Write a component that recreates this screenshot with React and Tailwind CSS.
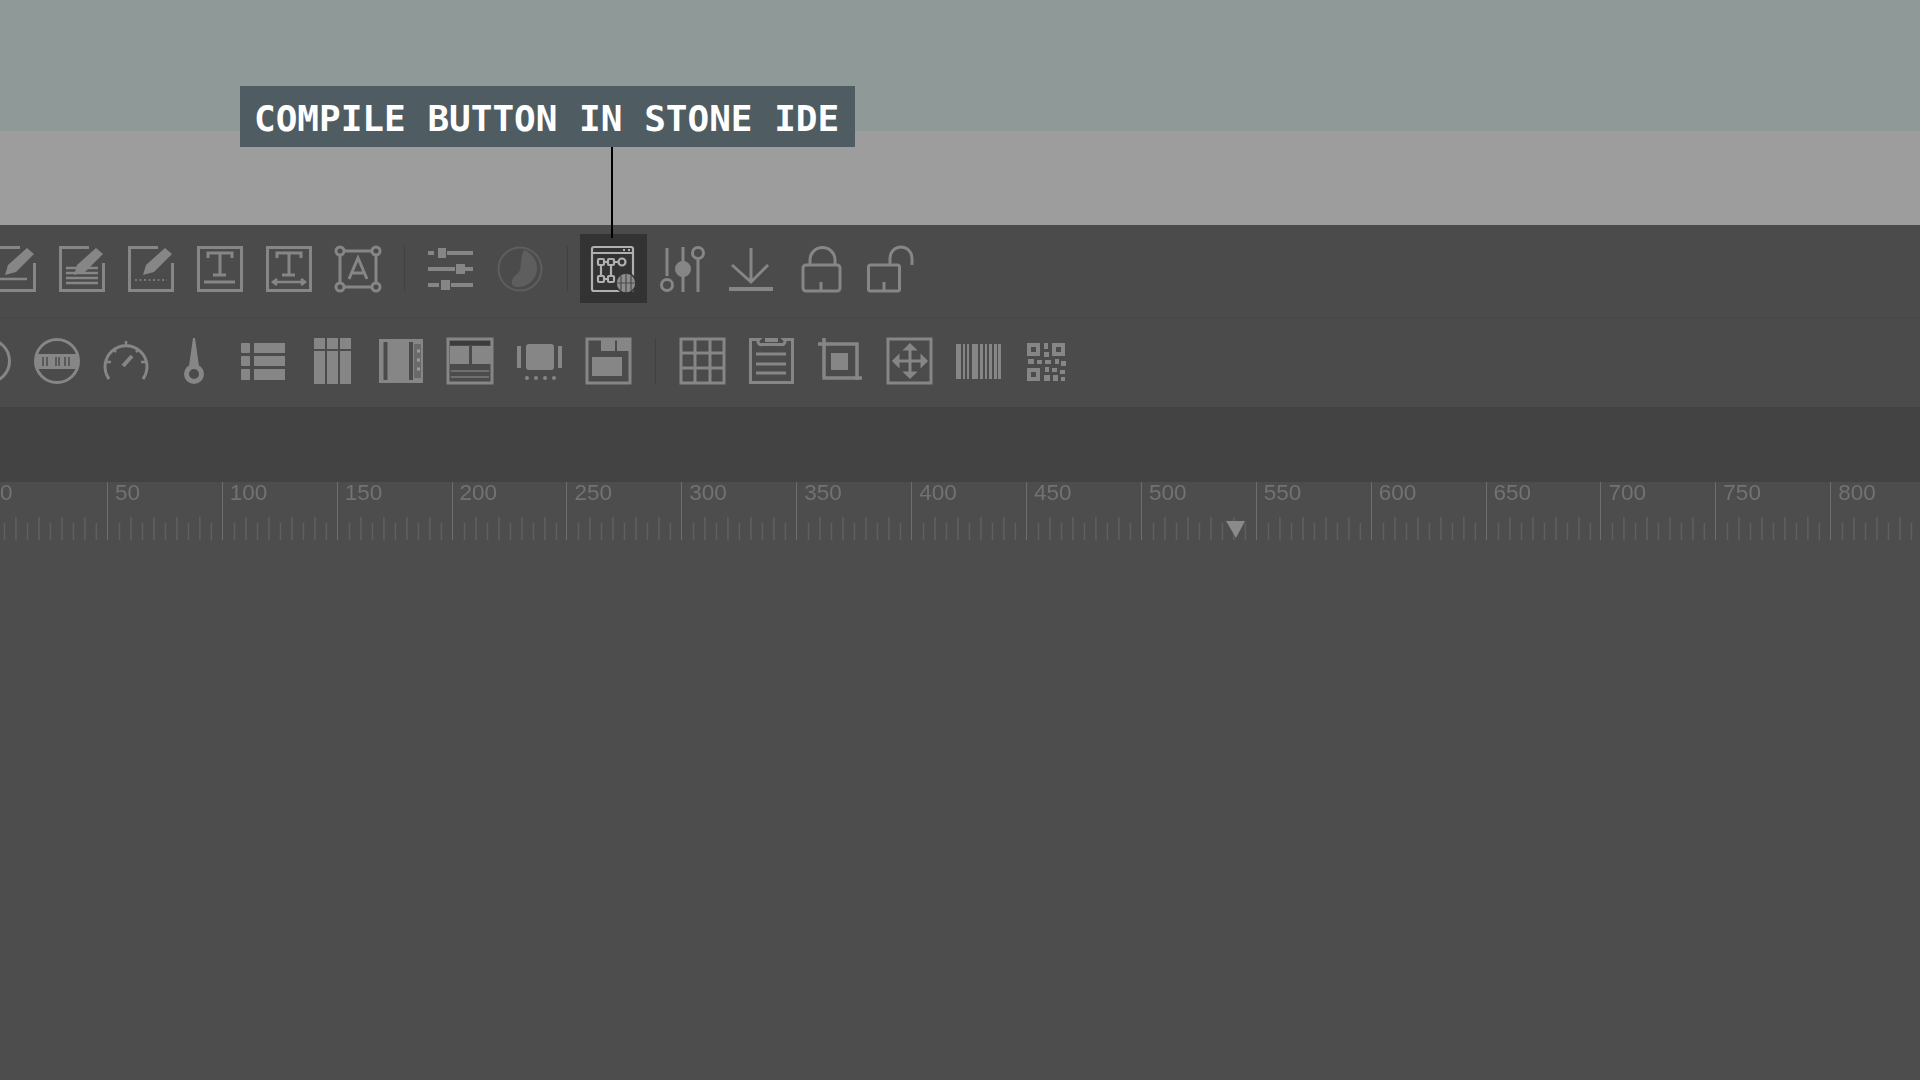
import React from 'react';

const Box = () => <rect x="1.5" y="1.5" width="43" height="43" fill="none" stroke="currentColor" strokeWidth="3" />;
const Pencil = () => <path d="M15 29l3-10L37 2l7 6-18 18z" fill="currentColor" stroke="none" />;
const Notched = () => <path d="M30 1.5H1.5v43h43V17" fill="none" stroke="currentColor" strokeWidth="3" />;

const Icon = ({ children, className = 'text-[#868686]' }) => (
  <svg viewBox="0 0 46 46" className={`w-[46px] h-[46px] shrink-0 overflow-visible blur-[0.7px] ${className}`} fill="none" stroke="currentColor" strokeWidth="3">
    {children}
  </svg>
);

const Sep = ({ className = '' }) => <div className={`w-px h-[46px] bg-[#414141] shrink-0 ${className}`}></div>;

const topRow = [
  <><Notched /><Pencil /><path d="M1 33h36" strokeWidth="2.500" /></>,
  <><Notched /><Pencil /><path d="M7 22h32M7 27h32M7 32h32M7 37h32" strokeWidth="2.500" /></>,
  <><Notched /><Pencil /><path d="M7 34h32" strokeWidth="1.500" strokeDasharray="2 2.500" /></>,
  <><Box /><path d="M11 12V7h24v5M23 7v22M16 29h13" /><path d="M7 36h31" /></>,
  <><Box /><path d="M11 12V7h24v5M23 7v22M16 29h13" /><path d="M7 36h32M11 33l-4 3 4 3M35 33l4 3-4 3" strokeWidth="2.500" /></>,
  <><path d="M9 5h28M5 9v28M41 9v28M9 41h28" /><circle cx="5" cy="5" r="4" /><circle cx="41" cy="5" r="4" /><circle cx="5" cy="41" r="4" /><circle cx="41" cy="41" r="4" /><path d="M14 33l9-21 9 21M17 27h12" /></>,
];

const rightRow = [
  <><path d="M7 2v28M23 1v45M38 13v33" /><circle cx="7" cy="39" r="5.500" /><circle cx="23" cy="23" r="6.500" fill="currentColor" /><circle cx="38" cy="7" r="5.500" /></>,
  <><path d="M22 2v34M3 19l19 17 17-17" /><path d="M0 43h44" strokeWidth="4" /></>,
  <><rect x="5" y="19" width="37" height="26" rx="3" /><path d="M12 19v-5a12.500 12.500 0 0 1 25 0v5M23 36v9" /></>,
  <><rect x="1.500" y="19" width="31" height="26" rx="2" /><path d="M23 19v-7a11 11 0 0 1 22 0v7M17 36v9" /></>,
];

const bottomRow = [
  <circle cx="23" cy="23" r="21.500" />,
  <><circle cx="23" cy="23" r="21.500" /><rect x="3" y="16" width="40" height="15" fill="currentColor" stroke="none" /><path d="M9 19v9M13 19v9M22 19v9M25 19v9M31 19v9M35 19v9" stroke="#5a5a5a" strokeWidth="2" /></>,
  <><path d="M6 41a21 21 0 1 1 34 0" /><path d="M4 24h4M38 24h4M10 11l3 3M36 11l-3 3M23 3v4" strokeWidth="2.500" /><path d="M20 28l9-10" strokeWidth="4" /></>,
  <><path d="M21 0h2l4 28H17z" fill="currentColor" stroke="none" /><circle cx="22" cy="36" r="7.500" strokeWidth="5" /></>,
  <g fill="currentColor" stroke="none"><rect x="0" y="5" width="9" height="10" rx="1" /><rect x="13" y="5" width="31" height="10" /><rect x="0" y="18" width="9" height="10" rx="1" /><rect x="13" y="18" width="31" height="10" /><rect x="0" y="31" width="9" height="11" rx="1" /><rect x="13" y="31" width="31" height="11" /></g>,
  <g fill="currentColor" stroke="none"><rect x="4" y="0" width="11" height="11" /><rect x="17" y="0" width="11" height="11" /><rect x="30" y="0" width="11" height="11" /><rect x="4" y="13" width="11" height="33" /><rect x="17" y="13" width="11" height="33" /><rect x="30" y="13" width="11" height="33" /></g>,
  <><rect x="0" y="1" width="44" height="44" fill="currentColor" stroke="none" /><path d="M6.500 4v38M32 4v38" stroke="#4b4b4b" strokeWidth="4" /><path d="M35 6h7v34h-7z" fill="#6a6a6a" stroke="none" /><path d="M38 13h3M38 22h3M38 31h3" stroke="#999" strokeWidth="3" /></>,
  <><rect x="0" y="1" width="44" height="44" /><rect x="2" y="8" width="19" height="18" fill="currentColor" stroke="none" /><rect x="24" y="8" width="19" height="18" fill="currentColor" stroke="none" /><path d="M2 5h40" stroke="#3c3c3c" strokeWidth="4" /><path d="M3 33h38" stroke="#6f6f6f" strokeWidth="2" /><path d="M3 39h38" stroke="#6f6f6f" strokeWidth="2" /></>,
  <g fill="currentColor" stroke="none"><rect x="9" y="6" width="28" height="26" rx="3" /><rect x="0" y="8" width="4" height="22" /><rect x="41" y="8" width="4" height="22" /><circle cx="10" cy="40" r="2" /><circle cx="19" cy="40" r="2" /><circle cx="28" cy="40" r="2" /><circle cx="37" cy="40" r="2" /></g>,
  <><rect x="1" y="1" width="43" height="44" /><path d="M15 0h14v13H15zM31 0h14v13H31z" fill="currentColor" stroke="none" /><rect x="6" y="19" width="30" height="19" fill="currentColor" stroke="none" /></>,
];

const lastRow = [
  <><rect x="1" y="1" width="43" height="44" /><path d="M15 1v44M30 1v44M1 15h43M1 30h43" /></>,
  <><path d="M10 1.500H1.500v43h42v-43H35a3 3 0 0 1-3 5H13a3 3 0 0 1-3-5z" /><rect x="16" y="0" width="13" height="4" fill="currentColor" stroke="none" /><path d="M7 16h30M7 26h30M7 35h30" /></>,
  <><path d="M0 6h39v36M6 0v40h38" strokeWidth="3.500" /><rect x="13" y="15" width="17" height="17" fill="currentColor" stroke="none" /></>,
  <><rect x="1" y="1" width="43" height="44" /><path d="M23 11v24M11 23h24" /><path d="M19 11l4-4 4 4zM19 35l4 4 4-4zM11 19l-4 4 4 4zM35 19l4 4-4 4z" fill="currentColor" /></>,
  <g fill="currentColor" stroke="none">{[[0,5],[7,2],[11,2],[16,6],[24,3],[29,2],[33,3],[38,3],[42,3]].map(([x, w]) => <rect key={x} x={x} y="6" width={w} height="35" />)}</g>,
  <g fill="currentColor" stroke="none"><path fillRule="evenodd" d="M2 5h13v13H2zM6 9v5h5V9zM27 5h13v13H27zM31 9v5h5V9zM2 30h13v13H2zM6 34v5h5v-5z" /><path d="M19 5h4v6h-4zM19 14h5v5h-5zM3 21h6v5H3zM12 22h5v4h-5zM20 22h6v4h-6zM30 21h4v5h-4zM36 23h5v5h-5zM20 29h4v5h-4zM27 30h5v4h-5zM35 32h5v4h-5zM19 37h6v6h-6zM28 37h5v6h-5zM36 39h4v4h-4z" /></g>,
];

function Compile() {
  return (
    <div className="relative w-[46px] h-[46px] shrink-0">
      <div className="absolute -left-[11px] -top-[12px] w-[67px] h-[69px] bg-[#333333]"></div>
      <svg viewBox="0 0 46 46" className="relative w-[46px] h-[46px] overflow-visible blur-[0.6px] text-[#b0b0b0]" fill="none" stroke="currentColor" strokeWidth="2.200">
        <rect x="1" y="1" width="41" height="44" rx="2" />
        <path d="M1 7h41M32 4h2M37 4h2" />
        <rect x="7" y="13" width="6" height="6" rx="1" />
        <rect x="17" y="13" width="6" height="6" rx="1" />
        <circle cx="31" cy="16" r="3.500" />
        <rect x="7" y="30" width="6" height="6" rx="1" />
        <rect x="17" y="30" width="6" height="6" rx="1" />
        <path d="M13 16h4M23 16h4M10 19v11M20 19v11M13 33h4" />
        <circle cx="35" cy="37" r="10" fill="#8c8c8c" stroke="#333333" strokeWidth="1.500" />
        <path d="M26 37h18M35 28v18M30 30v14M40 30v14" stroke="#4a4a4a" strokeWidth="1.200" />
      </svg>
    </div>
  );
}

const tickSteps = [1, 2, 3, 4, 5, 6, 7, 8, 9];

function RulerSegment({ value }) {
  return (
    <div className="relative w-[114.9px] h-[58px] shrink-0 border-l border-[#6e6e6e] pl-[7px]">
      <div className="text-[22.5px] leading-[22px] text-[#727272] blur-[0.3px] font-['Liberation_Sans',Arial,sans-serif]">{value}</div>
      <svg width="115" height="24" className="absolute left-0 bottom-0 blur-[0.3px]">
        {tickSteps.map(i => (
          <line
            key={i}
            x1={i * 11.49}
            x2={i * 11.49}
            y1={i % 2 === 0 ? 1 : 7}
            y2="24"
            stroke={i % 2 === 0 ? '#6a6a6a' : '#5f5f5f'}
            strokeWidth={i % 2 === 0 ? 1 : 1.500}
          />
        ))}
      </svg>
    </div>
  );
}

const rulerValues = Array.from({ length: 17 }, (_, i) => i * 50);

export default function App() {
  return (
    <div className="relative w-[1920px] h-[1080px] overflow-hidden bg-[#4d4d4d]">
      <div className="h-[131px] bg-[#8f9a98]"></div>
      <div className="h-[94px] bg-[#9d9d9d]"></div>

      <div className="bg-[#4b4b4b]">
        <div className="h-[93px] pt-[21px] border-b border-[#474747] flex gap-[23px] -ml-[10px]">
          {topRow.map((ic, i) => <Icon key={i}>{ic}</Icon>)}
          <Sep />
          <Icon>
            <path d="M0 7h6M19 7h26M0 23h27M37 23h8M0 39h11M23 39h22" strokeWidth="4" />
            <rect x="10" y="2" width="8" height="10" fill="currentColor" stroke="none" />
            <rect x="28" y="18" width="9" height="10" fill="currentColor" stroke="none" />
            <rect x="13" y="34" width="9" height="10" fill="currentColor" stroke="none" />
          </Icon>
          <Icon className="text-[#5e5e5e]">
            <circle cx="23" cy="23" r="21.500" strokeWidth="2" />
            <path d="M27 4a19 19 0 0 1-7 37c-8-1-6-9 0-13 6-4 2-14 7-24z" fill="currentColor" stroke="none" />
          </Icon>
          <Sep className="ml-px" />
          <Compile />
          {rightRow.map((ic, i) => <Icon key={i}>{ic}</Icon>)}
        </div>
        <div className="h-[89px] pt-[20px] flex gap-[23px] -ml-[35px]">
          {bottomRow.map((ic, i) => <Icon key={i}>{ic}</Icon>)}
          <Sep className="mr-px" />
          {lastRow.map((ic, i) => <Icon key={i}>{ic}</Icon>)}
        </div>
      </div>

      <div className="h-[75px] bg-[#434343]"></div>
      <div className="relative flex -ml-[8px]">
        {rulerValues.map(v => <RulerSegment key={v} value={v} />)}
        {/* playhead marker */}
        <svg width="19" height="17" className="absolute left-[1234px] top-[39px]">
          <path d="M0 0h19l-9 17z" fill="#8a8a8a" />
        </svg>
      </div>

      <div className="absolute left-[240px] top-[86px] w-[615px] h-[61px] bg-[#4f5c62] flex items-center pt-[5px] pl-[14px] text-white text-[36px] font-bold whitespace-nowrap font-['DejaVu_Sans_Mono',monospace]">
        COMPILE BUTTON IN STONE IDE
      </div>
      <div className="absolute left-[611px] top-[147px] w-[2px] h-[91px] bg-black"></div>
    </div>
  );
}
